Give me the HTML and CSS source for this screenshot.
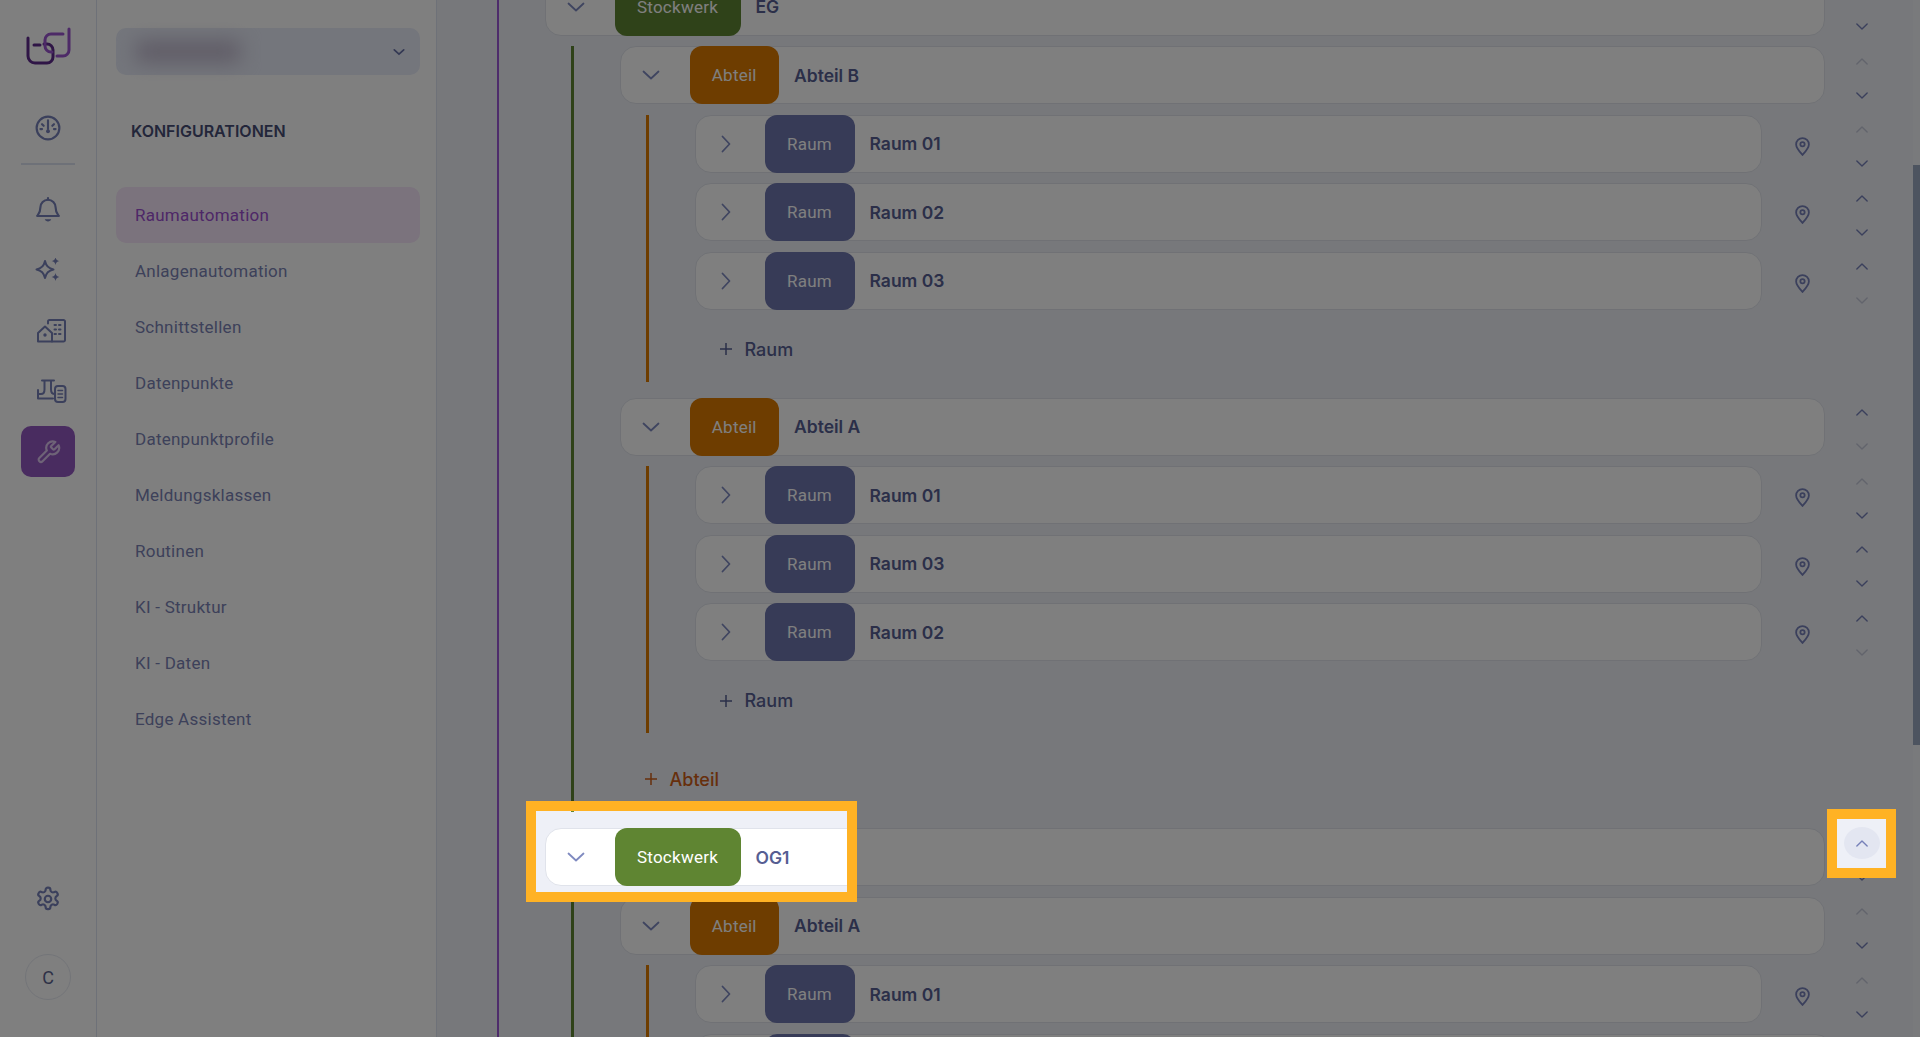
FILE: index.html
```html
<!DOCTYPE html>
<html lang="de">
<head>
    <meta charset="UTF-8">
    <title>Konfigurationen - Raumautomation</title>
    <link rel="stylesheet" href="styles.css">
</head>
<body>
    <svg class="sprites" width="0" height="0">
        <symbol id="down" viewBox="0 0 18 10"><path d="M1.5 1.5 9 8.5l7.5-7"/></symbol>
        <symbol id="right" viewBox="0 0 10 18"><path d="M1.5 1.5 8.5 9l-7 7.5"/></symbol>
        <symbol id="arrow-up" viewBox="0 0 14 8"><path d="M1 7l6-6 6 6"/></symbol>
        <symbol id="arrow-down" viewBox="0 0 14 8"><path d="M1 1l6 6 6-6"/></symbol>
        <symbol id="pin" viewBox="0 0 16 20"><path d="M8 19C4 14.500 1.200 11.500 1.200 7.800a6.800 6.800 0 0 1 13.600 0C14.800 11.500 12 14.500 8 19z"/><circle cx="8" cy="7.600" r="2.300"/></symbol>
        <symbol id="plus" viewBox="0 0 14 14"><path d="M7 1v12M1 7h12"/></symbol>
    </svg>

    <div class="app">
        <nav class="rail">
            <svg class="logo" viewBox="24 26 48 40" width="48" height="40">
                <path class="logo-dark" d="M28 38V56a7 7 0 0 0 7 7H47a6 6 0 0 0 6-6V50a6 6 0 0 0-6-6H44M34 45H40"/>
                <path class="logo-light" d="M69 29V50a6 6 0 0 1-6 6H57M63 34H51a6 6 0 0 0-6 6v6a6 6 0 0 0 6 6h1"/>
            </svg>
            <a class="rail-item rail-first">
                <svg viewBox="0 0 24 24" width="26" height="26"><circle cx="12" cy="12" r="10.500"/><path d="M12 5v8M6.500 8.500 8 10M17.500 8.500 16 10M5 13h1.500M17.500 13H19"/><circle class="solid" cx="12" cy="15" r="1.800"/></svg>
            </a>
            <div class="rail-divider"></div>
            <a class="rail-item">
                <svg viewBox="0 0 24 24" width="26" height="26"><path d="M12 2.500a7 7 0 0 0-7 7c0 5-2 6.500-3 8h20c-1-1.500-3-3-3-8a7 7 0 0 0-7-7z"/><path class="solid" d="M9 20.500h6c-.5 1.300-1.600 2-3 2s-2.500-.7-3-2z"/><path d="M12 1v1.500"/></svg>
            </a>
            <a class="rail-item">
                <svg viewBox="35 258 26 25" width="26" height="25"><path d="M45 261c.9 4.500 3.500 7.500 8.500 8.500-5 1-7.600 4-8.500 8.500-.9-4.500-3.500-7.500-8.500-8.500 5-1 7.600-4 8.500-8.500z"/><path class="solid" d="M55.500 257c.4 2.500 1.500 3.600 4 4-2.500.4-3.600 1.500-4 4-.4-2.500-1.500-3.600-4-4 2.500-.4 3.600-1.500 4-4zM55.500 273c.4 2.500 1.500 3.600 4 4-2.500.4-3.600 1.500-4 4-.4-2.500-1.500-3.600-4-4 2.500-.4 3.600-1.500 4-4z"/></svg>
            </a>
            <a class="rail-item rail-wide">
                <svg viewBox="0 0 30 24" width="30" height="24"><path d="M1 22.500v-8.500l7-6.500 7 6.500v8.500z" stroke-linejoin="round"/><path d="M11 4.500V2.500a1.500 1.500 0 0 1 1.500-1.500h14A1.500 1.500 0 0 1 28 2.500v18.500a1.500 1.500 0 0 1-1.500 1.500H15"/><circle class="solid" cx="8" cy="16" r="1.700"/><path d="M17.500 6h1.500M22 6h1.500M17.500 10.500h1.500M22 10.500h1.500M17.500 15h1.500M22 15h1.500" stroke-width="2"/></svg>
            </a>
            <a class="rail-item rail-wide">
                <svg viewBox="0 0 30 24" width="30" height="24"><path d="M5 1.500h12M7.500 1.500v9M14 1.500v9M1 15h3c2 0 3.500-1.500 3.500-4.500M14 10.500c0 3 1.500 4.500 4 4.500M1 11v8.500h15"/><rect x="18" y="7" width="10.500" height="16" rx="3"/><path d="M21 11.500h4.500M21 15h4.500M21 18.500h4.500" stroke-width="1.500"/></svg>
            </a>
            <a class="rail-item rail-active">
                <svg viewBox="0 0 24 24" width="26" height="26"><path d="M15 6.500a1 1 0 0 0 0 1.400l1.600 1.600a1 1 0 0 0 1.400 0l3.800-3.800a6 6 0 0 1-7.900 7.900l-6.900 6.900a2.100 2.100 0 0 1-3-3l6.900-6.900a6 6 0 0 1 7.900-7.900z"/></svg>
            </a>
            <a class="rail-item rail-settings">
                <svg viewBox="0 0 24 24" width="26" height="26"><path d="M12.200 1.500h-.4a2 2 0 0 0-2 2v.2a2 2 0 0 1-1 1.700l-.4.300a2 2 0 0 1-2 0l-.2-.1a2 2 0 0 0-2.700.7l-.2.400a2 2 0 0 0 .7 2.700l.2.100a2 2 0 0 1 1 1.700v.5a2 2 0 0 1-1 1.700l-.2.100a2 2 0 0 0-.7 2.700l.2.400a2 2 0 0 0 2.700.7l.2-.1a2 2 0 0 1 2 0l.4.300a2 2 0 0 1 1 1.700v.2a2 2 0 0 0 2 2h.4a2 2 0 0 0 2-2v-.2a2 2 0 0 1 1-1.700l.4-.3a2 2 0 0 1 2 0l.2.100a2 2 0 0 0 2.700-.7l.2-.4a2 2 0 0 0-.7-2.700l-.2-.1a2 2 0 0 1-1-1.700v-.5a2 2 0 0 1 1-1.700l.2-.1a2 2 0 0 0 .7-2.700l-.2-.4a2 2 0 0 0-2.700-.7l-.2.100a2 2 0 0 1-2 0l-.4-.3a2 2 0 0 1-1-1.700v-.2a2 2 0 0 0-2-2z"/><circle cx="12" cy="12" r="3"/></svg>
            </a>
            <div class="avatar">C</div>
        </nav>

        <aside class="panel">
            <div class="select">
                <div class="select-blur"></div>
                <svg viewBox="0 0 14 8" width="12" height="8"><path d="M1.500 1.500 7 6.500l5.500-5"/></svg>
            </div>
            <h2 class="panel-title">KONFIGURATIONEN</h2>
            <ul class="menu">
                <li class="menu-item active">Raumautomation</li>
                <li class="menu-item">Anlagenautomation</li>
                <li class="menu-item">Schnittstellen</li>
                <li class="menu-item">Datenpunkte</li>
                <li class="menu-item">Datenpunktprofile</li>
                <li class="menu-item">Meldungsklassen</li>
                <li class="menu-item">Routinen</li>
                <li class="menu-item">KI - Struktur</li>
                <li class="menu-item">KI - Daten</li>
                <li class="menu-item">Edge Assistent</li>
            </ul>
        </aside>

        <main class="main">
            <div class="tree">
                <div class="row">
                    <div class="card">
                        <span class="toggle"><svg class="chev-down"><use href="#down"/></svg></span>
                        <span class="tag tag-floor">Stockwerk</span>
                        <span class="name">EG</span>
                    </div>
                    <div class="arrows">
                        <span class="arrow"></span>
                        <span class="arrow"><svg><use href="#arrow-down"/></svg></span>
                    </div>
                </div>

                <div class="level level-floor">
                    <div class="row">
                        <div class="card">
                            <span class="toggle"><svg class="chev-down"><use href="#down"/></svg></span>
                            <span class="tag tag-part">Abteil</span>
                            <span class="name">Abteil B</span>
                        </div>
                        <div class="arrows">
                            <span class="arrow off"><svg><use href="#arrow-up"/></svg></span>
                            <span class="arrow"><svg><use href="#arrow-down"/></svg></span>
                        </div>
                    </div>
                    <div class="level level-part">
                        <div class="row">
                            <div class="card">
                                <span class="toggle"><svg class="chev-right"><use href="#right"/></svg></span>
                                <span class="tag tag-room">Raum</span>
                                <span class="name">Raum 01</span>
                            </div>
                            <span class="pin"><svg><use href="#pin"/></svg></span>
                            <div class="arrows">
                                <span class="arrow off"><svg><use href="#arrow-up"/></svg></span>
                                <span class="arrow"><svg><use href="#arrow-down"/></svg></span>
                            </div>
                        </div>
                        <div class="row">
                            <div class="card">
                                <span class="toggle"><svg class="chev-right"><use href="#right"/></svg></span>
                                <span class="tag tag-room">Raum</span>
                                <span class="name">Raum 02</span>
                            </div>
                            <span class="pin"><svg><use href="#pin"/></svg></span>
                            <div class="arrows">
                                <span class="arrow"><svg><use href="#arrow-up"/></svg></span>
                                <span class="arrow"><svg><use href="#arrow-down"/></svg></span>
                            </div>
                        </div>
                        <div class="row">
                            <div class="card">
                                <span class="toggle"><svg class="chev-right"><use href="#right"/></svg></span>
                                <span class="tag tag-room">Raum</span>
                                <span class="name">Raum 03</span>
                            </div>
                            <span class="pin"><svg><use href="#pin"/></svg></span>
                            <div class="arrows">
                                <span class="arrow"><svg><use href="#arrow-up"/></svg></span>
                                <span class="arrow off"><svg><use href="#arrow-down"/></svg></span>
                            </div>
                        </div>
                        <div class="add-row"><svg class="plus"><use href="#plus"/></svg>Raum</div>
                    </div>

                    <div class="row">
                        <div class="card">
                            <span class="toggle"><svg class="chev-down"><use href="#down"/></svg></span>
                            <span class="tag tag-part">Abteil</span>
                            <span class="name">Abteil A</span>
                        </div>
                        <div class="arrows">
                            <span class="arrow"><svg><use href="#arrow-up"/></svg></span>
                            <span class="arrow off"><svg><use href="#arrow-down"/></svg></span>
                        </div>
                    </div>
                    <div class="level level-part">
                        <div class="row">
                            <div class="card">
                                <span class="toggle"><svg class="chev-right"><use href="#right"/></svg></span>
                                <span class="tag tag-room">Raum</span>
                                <span class="name">Raum 01</span>
                            </div>
                            <span class="pin"><svg><use href="#pin"/></svg></span>
                            <div class="arrows">
                                <span class="arrow off"><svg><use href="#arrow-up"/></svg></span>
                                <span class="arrow"><svg><use href="#arrow-down"/></svg></span>
                            </div>
                        </div>
                        <div class="row">
                            <div class="card">
                                <span class="toggle"><svg class="chev-right"><use href="#right"/></svg></span>
                                <span class="tag tag-room">Raum</span>
                                <span class="name">Raum 03</span>
                            </div>
                            <span class="pin"><svg><use href="#pin"/></svg></span>
                            <div class="arrows">
                                <span class="arrow"><svg><use href="#arrow-up"/></svg></span>
                                <span class="arrow"><svg><use href="#arrow-down"/></svg></span>
                            </div>
                        </div>
                        <div class="row">
                            <div class="card">
                                <span class="toggle"><svg class="chev-right"><use href="#right"/></svg></span>
                                <span class="tag tag-room">Raum</span>
                                <span class="name">Raum 02</span>
                            </div>
                            <span class="pin"><svg><use href="#pin"/></svg></span>
                            <div class="arrows">
                                <span class="arrow"><svg><use href="#arrow-up"/></svg></span>
                                <span class="arrow off"><svg><use href="#arrow-down"/></svg></span>
                            </div>
                        </div>
                        <div class="add-row"><svg class="plus"><use href="#plus"/></svg>Raum</div>
                    </div>

                    <div class="add-row add-part"><svg class="plus"><use href="#plus"/></svg>Abteil</div>
                </div>

                <div class="row">
                    <div class="card">
                        <span class="toggle"><svg class="chev-down"><use href="#down"/></svg></span>
                        <span class="tag tag-floor">Stockwerk</span>
                        <span class="name">OG1</span>
                    </div>
                    <div class="arrows">
                        <span class="arrow hover"><svg><use href="#arrow-up"/></svg></span>
                        <span class="arrow"><svg><use href="#arrow-down"/></svg></span>
                    </div>
                </div>

                <div class="level level-floor">
                    <div class="row">
                        <div class="card">
                            <span class="toggle"><svg class="chev-down"><use href="#down"/></svg></span>
                            <span class="tag tag-part">Abteil</span>
                            <span class="name">Abteil A</span>
                        </div>
                        <div class="arrows">
                            <span class="arrow off"><svg><use href="#arrow-up"/></svg></span>
                            <span class="arrow"><svg><use href="#arrow-down"/></svg></span>
                        </div>
                    </div>
                    <div class="level level-part">
                        <div class="row">
                            <div class="card">
                                <span class="toggle"><svg class="chev-right"><use href="#right"/></svg></span>
                                <span class="tag tag-room">Raum</span>
                                <span class="name">Raum 01</span>
                            </div>
                            <span class="pin"><svg><use href="#pin"/></svg></span>
                            <div class="arrows">
                                <span class="arrow off"><svg><use href="#arrow-up"/></svg></span>
                                <span class="arrow"><svg><use href="#arrow-down"/></svg></span>
                            </div>
                        </div>
                        <div class="row">
                            <div class="card">
                                <span class="toggle"><svg class="chev-right"><use href="#right"/></svg></span>
                                <span class="tag tag-room">Raum</span>
                                <span class="name">Raum 02</span>
                            </div>
                            <span class="pin"><svg><use href="#pin"/></svg></span>
                        </div>
                    </div>
                </div>
            </div>
        </main>

        <div class="scrollbar"><div class="scroll-thumb"></div></div>

        <!-- tutorial dimmer with two cut out holes -->
        <div class="dimmer"></div>
        <div class="frame frame-row"></div>
        <div class="frame frame-arrow"></div>
    </div>
</body>
</html>
```

FILE: styles.css
```css
* {
    box-sizing: border-box;
}
html, body {
    margin: 0;
    padding: 0;
    height: 100%;
    overflow: hidden;
}
body {
    font-family: Inter, "Noto Sans", sans-serif;
    background-color: #eef0f7;
    color: #565e92;
}
.sprites {
    position: absolute;
}
.app {
    position: relative;
    display: flex;
    height: 100vh;
    overflow: hidden;
}

/* icon rail */
.rail {
    width: 97px;
    flex-shrink: 0;
    display: flex;
    flex-direction: column;
    align-items: center;
    padding: 26px 0 37px;
    background-color: #fff;
    border-right: 1px solid #dde3f0;
}
.logo {
    fill: none;
    stroke-width: 3;
    stroke-linecap: round;
}
.logo-dark {
    stroke: #5e2a8c;
}
.logo-light {
    stroke: #9a55cf;
}
.rail-item {
    width: 54px;
    height: 51px;
    margin-bottom: 9.5px;
    display: flex;
    align-items: center;
    justify-content: center;
    border-radius: 10px;
}
.rail-item svg {
    fill: none;
    stroke: #7680b8;
    stroke-width: 2;
    stroke-linecap: round;
    stroke-linejoin: round;
}
.rail-item svg .solid {
    fill: #7680b8;
    stroke: none;
}
.rail-first {
    margin-top: 36px;
    margin-bottom: 10px;
}
.rail-divider {
    width: 54px;
    height: 2px;
    margin-bottom: 19px;
    background-color: #dde3f0;
}
.rail-wide svg {
    margin-left: 8px;
}
.rail-active {
    background-color: #9358c0;
}
.rail-active svg {
    stroke: #dcc6ee;
}
.rail-settings {
    margin-top: auto;
    margin-bottom: 29.500px;
}
.avatar {
    width: 46px;
    height: 46px;
    display: flex;
    align-items: center;
    justify-content: center;
    border: 1px solid #e6e9f1;
    border-radius: 50%;
    color: #5c6590;
    font-family: Roboto, sans-serif;
    font-size: 18px;
}

/* second column */
.panel {
    width: 340px;
    flex-shrink: 0;
    padding: 28px 16px 0 19px;
    background-color: #fff;
    border-right: 1px solid #dde3f0;
}
.select {
    height: 47px;
    display: flex;
    align-items: center;
    justify-content: flex-end;
    padding-right: 15px;
    border-radius: 10px;
    background-color: #e8ecf8;
    position: relative;
}
.select svg {
    fill: none;
    stroke: #6670a6;
    stroke-width: 2;
    stroke-linecap: round;
}
.select-blur {
    position: absolute;
    left: 20px;
    top: 13px;
    width: 104px;
    height: 21px;
    background-color: #bdb5ca;
    filter: blur(10px);
}
.panel-title {
    margin: 46px 0 0 15px;
    height: 20px;
    line-height: 20px;
    font-size: 16px;
    font-weight: 600;
    color: #474d75;
}
.menu {
    list-style: none;
    margin: 46px 0 0;
    padding: 0;
}
.menu-item {
    height: 56px;
    line-height: 56px;
    padding-left: 19px;
    border-radius: 10px;
    font-family: Roboto, sans-serif;
    font-size: 17px;
    letter-spacing: 0.25px;
    color: #7a82b4;
}
.menu-item.active {
    background-color: #f6e6fa;
    color: #9c4fd0;
}

/* tree */
.main {
    flex: 1;
    min-width: 0;
    padding: 0 16px 0 60px;
    overflow: hidden;
}
.tree {
    margin-top: -22.500px;
    min-height: 1100px;
    padding-left: 45.500px;
    border-left: 2.500px solid #9c59d6;
}
.row {
    display: flex;
    align-items: flex-start;
    height: 58px;
    margin-bottom: 10.500px;
}
.card {
    flex: 1;
    min-width: 0;
    height: 58px;
    display: flex;
    align-items: center;
    background-color: #fff;
    border: 1px solid #e0e3eb;
    border-radius: 16px;
}
.toggle {
    width: 60px;
    margin-right: 9px;
    display: flex;
    justify-content: center;
}
.toggle svg {
    fill: none;
    stroke: #7f8ac0;
    stroke-width: 1.800;
    stroke-linecap: round;
    stroke-linejoin: round;
}
.chev-down {
    width: 18px;
    height: 10px;
}
.chev-right {
    width: 10px;
    height: 18px;
}
.tag {
    align-self: stretch;
    margin: -1px 0;
    display: flex;
    align-items: center;
    justify-content: center;
    border-radius: 12px;
    color: #fff;
    font-family: Roboto, sans-serif;
    font-size: 17px;
    letter-spacing: 0.25px;
}
.tag-floor {
    width: 126px;
    background-color: #5f8532;
}
.tag-part {
    width: 89.500px;
    background-color: #dc7a00;
}
.tag-room {
    width: 90px;
    background-color: #6e76ae;
}
.name {
    margin-left: 15px;
    font-size: 17.500px;
    font-weight: 600;
    color: #565e92;
}
.pin {
    width: 65px;
    padding-left: 15px;
    margin-top: 22px;
    display: flex;
    justify-content: center;
}
.pin svg {
    width: 15px;
    height: 19px;
    fill: none;
    stroke: #7680b8;
    stroke-width: 1.900;
}
.arrows {
    width: 70px;
    margin-left: 2px;
    margin-top: -2px;
    flex-shrink: 0;
}
.pin + .arrows {
    margin-left: 0;
}
.arrow {
    height: 34px;
    display: flex;
    align-items: center;
    justify-content: center;
}
.arrow svg {
    width: 12px;
    height: 7px;
    fill: none;
    stroke: #7680b8;
    stroke-width: 1.600;
    stroke-linecap: round;
    stroke-linejoin: round;
}
.arrow.off svg {
    stroke: #c4c8d8;
}
.arrow.hover {
    width: 36px;
    height: 32px;
    margin: 1px auto;
    border-radius: 50%;
    background-color: #e3e6f1;
}
.level {
    margin-left: 26px;
    border-left: 3px solid;
    padding-left: 46px;
}
.level-floor {
    border-color: #5f8532;
    padding-bottom: 4px;
    margin-bottom: 16px;
}
.level-part {
    border-color: #dc7a00;
    padding-bottom: 3.500px;
    margin-bottom: 16px;
}
.add-row {
    height: 58px;
    padding-left: 24px;
    display: flex;
    align-items: center;
    font-size: 18px;
    font-weight: 500;
    color: #565e92;
}
.plus {
    width: 14px;
    height: 14px;
    margin-right: 12px;
    fill: none;
    stroke: currentColor;
    stroke-width: 1.500;
}
.add-part {
    color: #cf5f17;
    margin-top: 17px;
}

/* scrollbar */
.scrollbar {
    width: 7px;
    flex-shrink: 0;
    background-color: #f3f4f8;
}
.scroll-thumb {
    height: 580px;
    margin-top: 165px;
    background-color: #9aa8c0;
}

/* dimmer and highlight frames */
.dimmer {
    position: absolute;
    inset: 0;
    background-color: rgba(0, 0, 0, 0.5);
    clip-path: path(evenodd, "M0 0H1920V1037H0Z M536 811H847V892H536Z M1837 819H1886V868H1837Z");
}
.frame {
    position: absolute;
    border: 10px solid #ffb224;
}
.frame-row {
    left: 526px;
    top: 801px;
    width: 331px;
    height: 101px;
}
.frame-arrow {
    left: 1827px;
    top: 809px;
    width: 69px;
    height: 69px;
}
```
